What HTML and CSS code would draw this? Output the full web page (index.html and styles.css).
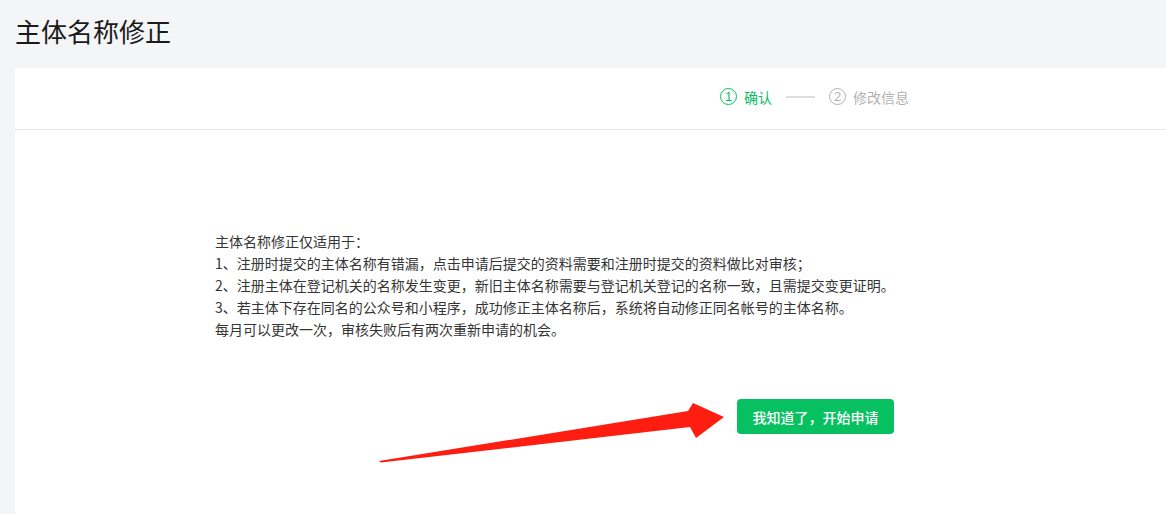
FILE: index.html
```html
<!DOCTYPE html>
<html lang="zh">
<head>
<meta charset="utf-8">
<title>主体名称修正</title>
<link rel="stylesheet" href="styles.css">
</head>
<body>
<div class="page">
  <h1 class="title">主体名称修正</h1>
  <div class="card-head">
    <div class="steps">
      <div class="step active"><span class="num">1</span><span class="label">确认</span></div>
      <span class="step-line"></span>
      <div class="step"><span class="num">2</span><span class="label">修改信息</span></div>
    </div>
  </div>
  <div class="card-body">
    <div class="notice">
      <div class="desc">
        <p>主体名称修正仅适用于：</p>
        <p>1、注册时提交的主体名称有错漏，点击申请后提交的资料需要和注册时提交的资料做比对审核；</p>
        <p>2、注册主体在登记机关的名称发生变更，新旧主体名称需要与登记机关登记的名称一致，且需提交变更证明。</p>
        <p>3、若主体下存在同名的公众号和小程序，成功修正主体名称后，系统将自动修正同名帐号的主体名称。</p>
        <p>每月可以更改一次，审核失败后有两次重新申请的机会。</p>
      </div>
      <div class="actions">
        <button class="btn-primary">我知道了，开始申请</button>
      </div>
    </div>
  </div>
</div>
<svg class="annot" width="1166" height="514" viewBox="0 0 1166 514">
  <polygon points="379,461 688,411 693,403 724,417 696,438 690,427 381,462.5" fill="#fe1d11"/>
</svg>
</body>
</html>
```

FILE: styles.css
```css
html, body {
  margin: 0;
  padding: 0;
  background: #f4f5f7;
  overflow: hidden;
}
body {
  width: 1166px;
  height: 514px;
  position: relative;
  font-family: "Noto Sans CJK SC", "Noto Sans", sans-serif;
  color: #353535;
}
.page {
  padding-left: 15px;
}
.title {
  margin: 0;
  height: 68px;
  padding-top: 12px;
  box-sizing: border-box;
  font-size: 26px;
  line-height: 38px;
  font-weight: 400;
  color: #1a1a1a;
}
.card-head {
  background: #fff;
  border-bottom: 1px solid #e4e6e9;
  display: flex;
  align-items: center;
  padding-left: 705px;
  padding-bottom: 4px;
  box-sizing: border-box;
  height: 62px;
}
.steps {
  display: flex;
  align-items: center;
  font-size: 14px;
  color: #b2b2b2;
}
.step {
  display: flex;
  align-items: center;
}
.num {
  width: 17px;
  height: 17px;
  box-sizing: border-box;
  border: 1px solid currentColor;
  border-radius: 50%;
  display: flex;
  align-items: center;
  justify-content: center;
  font-size: 13px;
  line-height: 1;
  font-family: "Liberation Sans", sans-serif;
  margin-right: 7px;
}
.step.active {
  color: #07c160;
}
.step-line {
  width: 29px;
  height: 2px;
  background: #dedede;
  margin: 0 14px 0 14px;
}
.card-body {
  background: #fff;
  height: 384px;
  border-top-left-radius: 4px;
  padding-top: 100px;
  box-sizing: border-box;
}
.notice {
  margin-left: 200px;
  width: 679px;
}
.desc p {
  margin: 0;
  font-size: 14px;
  line-height: 22px;
  color: #353535;
  white-space: nowrap;
}
.actions {
  display: flex;
  justify-content: flex-end;
  margin-top: 59px;
}
.btn-primary {
  background: #07c160;
  color: #fff;
  border: 0;
  border-radius: 4px;
  width: 157px;
  height: 35px;
  font-family: inherit;
  font-size: 14px;
  font-weight: 500;
  padding: 0;
}
.annot {
  position: absolute;
  left: 0;
  top: 0;
  pointer-events: none;
}
```
